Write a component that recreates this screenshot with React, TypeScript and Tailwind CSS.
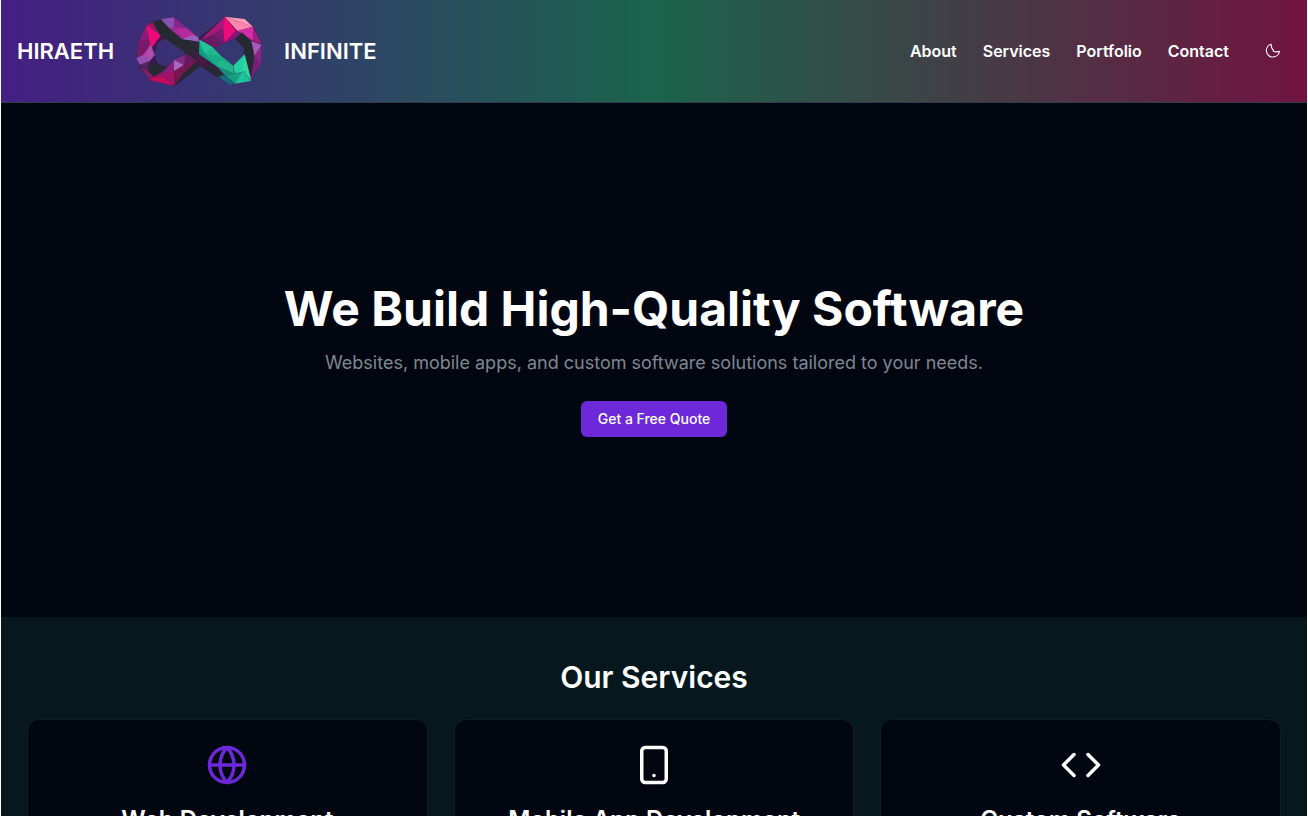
import { Code, Globe, Smartphone } from "lucide-react";

const ring =
  "M35 160 40 115 65 60 108 42 148 37 222 98 300 35 360 42 387 65 411 118 408 180 376 230 315 240 280 218 225 182 190 212 150 242 75 226 45 190Z" +
  "M100 112 88 150 100 176 126 188 148 164 182 150 180 138 128 98Z" +
  "M262 133 300 165 326 182 356 158 358 130 330 102 300 113Z";

const facets: [string, string][] = [
  ["65,60 72,102 40,115", "#8a1b78"],
  ["65,60 100,76 108,92 76,136 72,100", "#ea0a7a"],
  ["65,60 84,52 104,76 98,84", "#9c1762"],
  ["40,115 72,100 78,122 56,150 35,160", "#761a66"],
  ["78,118 90,150 74,170 58,150", "#a850b4"],
  ["35,160 58,148 76,168 45,180", "#9350b0"],
  ["56,150 78,120 66,160", "#c33fa8"],
  ["45,180 76,168 68,196", "#4d2560"],
  ["45,185 68,194 88,216 75,226", "#7b1f68"],
  ["68,194 84,178 130,184 112,206 88,216", "#252a32"],
  ["75,226 88,214 118,216 150,242", "#c70c5e"],
  ["88,214 106,204 118,216", "#8b1a6b"],
  ["106,206 148,196 150,242 118,216", "#a21268"],
  ["106,206 126,188 148,164 148,198", "#85207c"],
  ["148,164 178,180 148,200", "#a968c0"],
  ["148,164 182,150 206,152 178,180", "#7d2c86"],
  ["182,150 198,132 226,160 178,180", "#671a60"],
  ["148,198 178,180 226,160 176,206 150,240", "#751850"],
  ["176,206 226,164 228,182 190,212 150,242", "#252a32"],
  ["84,52 108,44 150,72 222,128 222,148 295,212 315,240 280,218 192,150 104,88", "#252a32"],
  ["198,132 222,148 258,184 225,182", "#4b1746"],
  ["108,42 148,37 150,70 134,70", "#8950b0"],
  ["134,70 150,65 184,100 172,102", "#a12b96"],
  ["148,37 188,70 150,74", "#86278c"],
  ["150,70 188,70 222,98 182,104", "#b22a9c"],
  ["172,102 206,90 222,98 222,112", "#9b62bc"],
  ["186,104 222,110 222,134", "#30283d"],
  ["228,104 300,35 298,72 262,92", "#a51a78"],
  ["228,104 262,90 298,72 300,113 262,133", "#671b60"],
  ["262,90 298,68 300,113", "#7c1b72"],
  ["300,35 334,78 300,113 296,72", "#ee0b79"],
  ["300,35 385,65 338,78", "#ff86af"],
  ["300,35 360,42 385,65", "#ff9dbb"],
  ["338,78 385,65 386,108", "#d32ca8"],
  ["334,78 386,108 334,100 300,113", "#85177b"],
  ["385,65 411,118 386,108", "#a91d80"],
  ["332,100 352,82 382,112 388,152 377,228 358,158 358,130", "#252a32"],
  ["380,108 411,120 390,154", "#a45abc"],
  ["411,120 408,180 388,154", "#8a2584"],
  ["390,152 408,180 376,228", "#742077"],
  ["224,104 262,125 286,150 324,180 276,184 224,148", "#16ad87"],
  ["224,104 262,125 242,148", "#22c69a"],
  ["242,148 262,125 288,152", "#20b68f"],
  ["224,126 242,148 276,184 224,148", "#129a80"],
  ["276,184 288,166 326,182 328,206", "#20b58f"],
  ["326,182 360,148 364,198 330,206", "#25d09e"],
  ["360,148 380,226 354,198", "#2fd9a7"],
  ["276,184 328,206 300,210", "#179079"],
  ["300,210 330,206 366,198 332,236", "#18a082"],
  ["354,198 380,228 332,236", "#20c49a"],
  ["280,216 300,208 332,236 315,240", "#17677d"],
];

function Logo() {
  return (
    <svg viewBox="34 33 378 210" className="h-[70px] w-[126px]" role="img" aria-label="Infinity emblem">
      <path d={ring} fill="#3a1b48" fillRule="evenodd" />
      {facets.map(([points, fill]) => (
        <polygon key={points} points={points} fill={fill} />
      ))}
    </svg>
  );
}

const links = ["About", "Services", "Portfolio", "Contact"];

const services = [
  { title: "Web Development", Icon: Globe, color: "text-[#6d28d9]" },
  { title: "Mobile App Development", Icon: Smartphone, color: "text-white" },
  { title: "Custom Software", Icon: Code, color: "text-white" },
];

export default function App() {
  return (
    <div className="h-screen overflow-hidden border-x border-white bg-[#020610] font-['Inter',sans-serif] text-white">
      <header className="flex items-center justify-between border-b border-[#303b4b] bg-linear-to-r/srgb from-[#451e84] via-[#1a644b] to-[#701440] py-4 pr-4 pl-4">
        <a href="#home" className="flex items-center gap-[22px] text-[22px] font-semibold">
          <span>HIRAETH</span>
          <Logo />
          <span>INFINITE</span>
        </a>
        <nav className="flex items-center gap-[26px] text-base font-semibold">
          {links.map((link) => (
            <a key={link} href={`#${link.toLowerCase()}`}>{link}</a>
          ))}
          <button type="button" aria-label="Toggle theme" className="flex size-9 items-center justify-center">
            <svg
              viewBox="0 0 24 24"
              className="size-[18px]"
              fill="none"
              stroke="currentColor"
              strokeWidth="1.5"
              strokeLinejoin="round"
            >
              <path d="M9.500 3C9.500 6 9.500 8 11.500 9.500L13 12.500C15 14 18 13 20.500 12.500A8.700 8.700 0 1 1 9.500 3Z" />
            </svg>
          </button>
        </nav>
      </header>

      <main>
        <section className="flex h-[514px] flex-col items-center justify-center pt-[2px] text-center">
          <h1 className="text-5xl leading-[48px] font-bold">We Build High-Quality Software</h1>
          <p className="mt-4 text-lg leading-7 text-[#7f8792]">
            Websites, mobile apps, and custom software solutions tailored to your needs.
          </p>
          <button type="button" className="mt-6 h-9 rounded-md bg-[#6d28d9] px-[17px] text-sm font-medium">
            Get a Free Quote
          </button>
        </section>

        <section id="services" className="bg-[#06171e] px-[26px] pt-10">
          <h2 className="text-center text-3xl leading-10 font-semibold">Our Services</h2>
          <div className="mt-[22px] grid grid-cols-3 gap-[26px]">
            {services.map(({ title, Icon, color }) => (
              <article key={title} className="flex flex-col items-center rounded-xl border border-[#101b24] bg-[#020610] px-6 pt-6 pb-8 text-center">
                <Icon className={color} size={42} />
                <h3 className="mt-[18px] text-2xl leading-8 font-semibold">{title}</h3>
              </article>
            ))}
          </div>
        </section>
      </main>
    </div>
  );
}
